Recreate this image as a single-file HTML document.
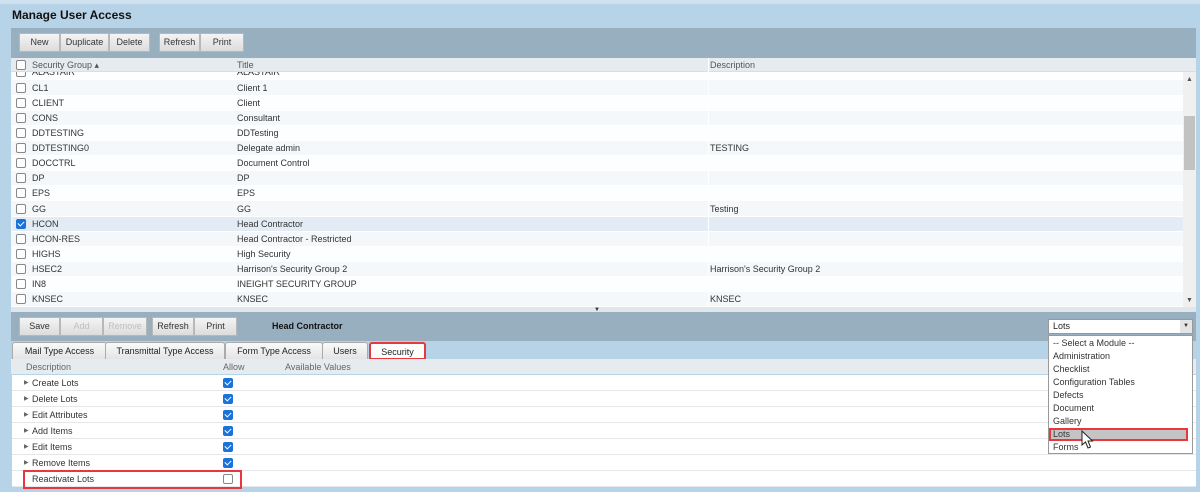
<!DOCTYPE html>
<html><head><style>
*{margin:0;padding:0;box-sizing:border-box}
body{width:1200px;height:492px;background:#b7d3e7;font-family:"Liberation Sans",sans-serif;font-size:9px;color:#333;position:relative;overflow:hidden}
.a{position:absolute}
.title{left:12px;top:8px;font-size:12px;font-weight:bold;color:#111}
.tb{background:#98afbf}
.btn{position:absolute;height:19px;background:linear-gradient(#f4f4f4,#dcdcdc);border:1px solid #b8b8b8;font-size:9px;line-height:17px;text-align:center;color:#333}
.dis{color:#c0c0c0}
.row{position:absolute;left:12px;width:1171px;height:15px;line-height:15px;border-bottom:1px solid #fff}
.row span{position:absolute}
.cb{position:absolute;width:10px;height:10px;border:1px solid #888;background:#fff;border-radius:2px}
.ck{position:absolute;width:10px;height:10px;background:#1a73d9;border-radius:2px}
.ck:after{content:"";position:absolute;left:3px;top:1px;width:3px;height:5px;border:solid #fff;border-width:0 1.5px 1.5px 0;transform:rotate(45deg)}
.srow{position:absolute;left:12px;width:1184px;height:16px;line-height:16px;background:#fff;border-bottom:1px solid #e4e8ec}
.srow span{position:absolute}
.tab{position:absolute;top:342px;height:17px;line-height:17px;font-size:9px;color:#222;background:linear-gradient(#fafafa,#e4e4e4);border:1px solid #aaa;border-bottom:none;border-radius:3px 3px 0 0;text-align:center}
.dd div{height:13px;line-height:13px;padding-left:4px}
</style></head><body>
<div class="a title">Manage User Access</div>
<div class="a" style="left:0;top:0;width:1200px;height:4px;background:#cfe1ee"></div>
<div class="a tb" style="left:11px;top:28px;width:1185px;height:30px"></div>
<div class="btn" style="left:19px;top:33px;width:41px">New</div>
<div class="btn" style="left:60px;top:33px;width:49px">Duplicate</div>
<div class="btn" style="left:109px;top:33px;width:41px">Delete</div>
<div class="btn" style="left:159px;top:33px;width:41px">Refresh</div>
<div class="btn" style="left:200px;top:33px;width:44px">Print</div>
<div class="a" style="left:11px;top:58px;width:1185px;height:253px;background:#f4f8fb"></div>
<div class="a" id="rows" style="left:0;top:0"></div>
<div class="a" style="left:11px;top:58px;width:1185px;height:14px;background:#e6ebef;border-bottom:1px solid #d8dee3"></div>
<div class="cb" style="left:16px;top:60px"></div>
<div class="a" style="left:32px;top:60px;color:#555">Security Group ▴</div>
<div class="a" style="left:237px;top:60px;color:#555">Title</div>
<div class="a" style="left:710px;top:60px;color:#555">Description</div>
<div class="a" style="left:708px;top:58px;width:1px;height:14px;background:#fff"></div>
<div class="a" style="left:1183px;top:72px;width:13px;height:236px;background:#f0f0f0"></div>
<div class="a" style="left:1184px;top:116px;width:11px;height:54px;background:#c2c2c2"></div>
<div class="a" style="left:1186px;top:76px;font-size:7px;color:#555">▲</div>
<div class="a" style="left:1186px;top:297px;font-size:7px;color:#555">▼</div>
<div class="a" style="left:11px;top:307px;width:1185px;height:5px;background:#dfe6ec"></div>
<div class="a" style="left:594px;top:307px;font-size:6px;color:#333">▼</div>
<div class="a tb" style="left:11px;top:312px;width:1185px;height:29px"></div>
<div class="btn" style="left:19px;top:317px;width:41px">Save</div>
<div class="btn dis" style="left:60px;top:317px;width:43px">Add</div>
<div class="btn dis" style="left:103px;top:317px;width:44px">Remove</div>
<div class="btn" style="left:152px;top:317px;width:42px">Refresh</div>
<div class="btn" style="left:194px;top:317px;width:43px">Print</div>
<div class="a" style="left:272px;top:321px;font-weight:bold;color:#111">Head Contractor</div>
<div class="tab" style="left:12px;width:95px">Mail Type Access</div>
<div class="tab" style="left:105px;width:120px">Transmittal Type Access</div>
<div class="tab" style="left:225px;width:98px">Form Type Access</div>
<div class="tab" style="left:322px;width:46px">Users</div>
<div class="tab" style="left:369px;width:57px;background:#fff;border:2px solid #e8383d;height:18px">Security</div>
<div class="a" style="left:11px;top:359px;width:1185px;height:15px;background:#e6ebef"></div>
<div class="a" style="left:26px;top:362px;color:#666">Description</div>
<div class="a" style="left:223px;top:362px;color:#666">Allow</div>
<div class="a" style="left:285px;top:362px;color:#666">Available Values</div>
<div id="srows"></div>
<div class="a" style="left:23px;top:470px;width:219px;height:19px;border:2px solid #e8383d"></div>
<div class="a" style="left:1048px;top:319px;width:145px;height:15px;background:#fff;border:1px solid #999;padding-left:4px;line-height:13px;color:#222">Lots</div>
<div class="a" style="left:1180px;top:320px;width:12px;height:13px;background:#e4e4e4;font-size:6px;text-align:center;line-height:13px">▼</div>
<div class="a dd" style="left:1048px;top:335px;width:145px;height:119px;background:#fff;border:1px solid #999;padding-top:1px;color:#333">
<div>-- Select a Module --</div><div>Administration</div><div>Checklist</div><div>Configuration Tables</div><div>Defects</div><div>Document</div><div>Gallery</div><div style="background:#c4c4c4;outline:2px solid #e8383d;outline-offset:-2px;margin-right:4px">Lots</div><div>Forms</div>
</div>
<svg class="a" style="left:1081px;top:430px" width="14" height="20" viewBox="0 0 14 20"><path d="M1 1 L1 15 L4.5 12 L7 18 L9.5 17 L7 11 L11.5 11 Z" fill="#fff" stroke="#222" stroke-width="1"/></svg>
<script>
var d=[["ALASTAIR","ALASTAIR",""],["CL1","Client 1",""],["CLIENT","Client",""],["CONS","Consultant",""],["DDTESTING","DDTesting",""],["DDTESTING0","Delegate admin","TESTING"],["DOCCTRL","Document Control",""],["DP","DP",""],["EPS","EPS",""],["GG","GG","Testing"],["HCON","Head Contractor",""],["HCON-RES","Head Contractor - Restricted",""],["HIGHS","High Security",""],["HSEC2","Harrison's Security Group 2","Harrison's Security Group 2"],["IN8","INEIGHT SECURITY GROUP",""],["KNSEC","KNSEC","KNSEC"]];
var h="";
d.forEach(function(r,k){var t=72.86+15.14*k-7.5;var bg=k==10?"#e3ecf5":(k%2?"#f4f8fb":"#fdfeff");
h+='<div class="row" style="top:'+t+'px;background:'+bg+'"><span style="left:4px;top:2px" class="'+(k==10?'ck':'cb')+'"></span><span style="left:20px">'+r[0]+'</span><span style="left:225px">'+r[1]+'</span><span style="left:698px">'+r[2]+'</span><span style="left:696px;top:0;width:1px;height:15px;background:#fff"></span></div>';});
document.getElementById("rows").innerHTML=h;
var s=["Create Lots","Delete Lots","Edit Attributes","Add Items","Edit Items","Remove Items","Reactivate Lots"];h="";
s.forEach(function(n,k){var t=375+16*k;h+='<div class="srow" style="top:'+t+'px">'+(k<6?'<span style="left:12px;font-size:6px;color:#666">▶</span>':'')+'<span style="left:20px">'+n+'</span><span class="'+(k<6?'ck':'cb')+'" style="left:211px;top:3px"></span></div>';});
document.getElementById("srows").innerHTML=h;
</script>
</body></html>
